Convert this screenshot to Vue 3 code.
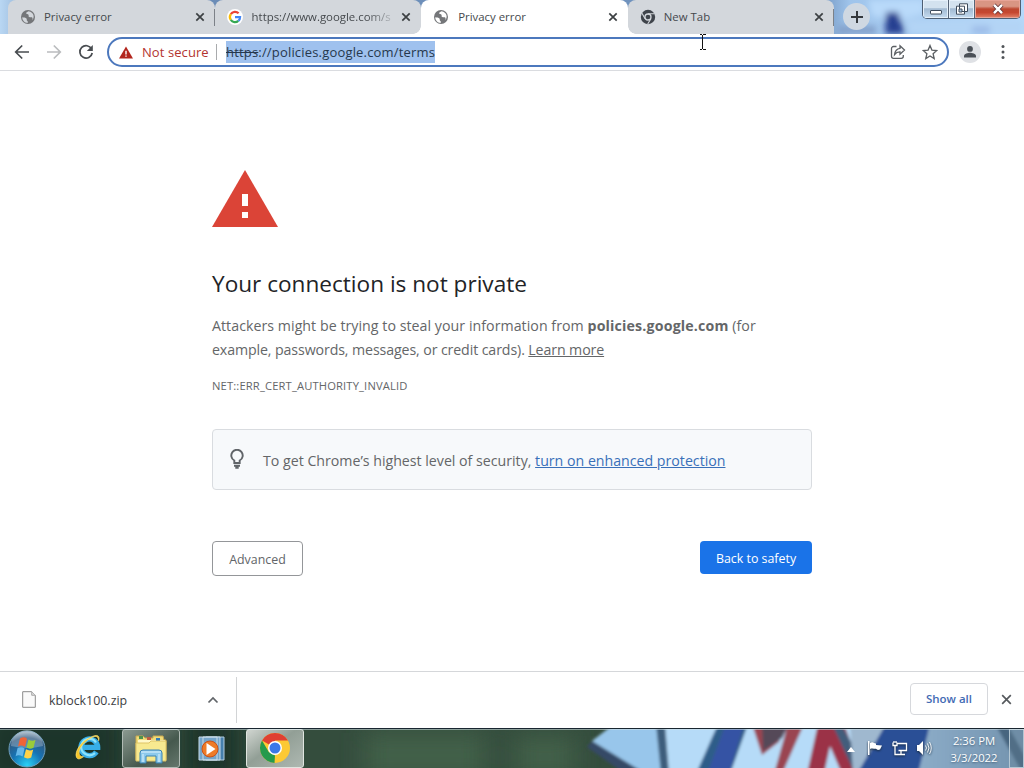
<template>
  <div class="screen">
    <header class="tab-strip">
      <svg class="sky" viewBox="0 0 1024 34" aria-hidden="true">
        <defs>
          <filter id="soft"><feGaussianBlur stdDeviation="3" /></filter>
          <linearGradient id="skyFill" x1="0" x2="1" y1="0" y2="0">
            <stop offset="0" stop-color="#b9d7f3" />
            <stop offset="0.05" stop-color="#6889b4" />
            <stop offset="0.8" stop-color="#7295c0" />
            <stop offset="0.83" stop-color="#9fc4eb" />
            <stop offset="1" stop-color="#b5d9fb" />
          </linearGradient>
        </defs>
        <rect width="1024" height="34" fill="url(#skyFill)" />
        <g filter="url(#soft)">
          <path d="M868 0h56v14l-26 6-26-4z" fill="#b9dafa" />
          <path d="M886 12h12l7 22h-20z" fill="#253f91" />
          <path d="M838 26h38v8h-38z" fill="#829fc9" />
          <path d="M905 20h119v14H910z" fill="#b3d4f5" />
          <path d="M972 26h18v8h-18z" fill="#9dbce8" />
        </g>
      </svg>

      <div class="tabs">
        <div v-for="tab in tabs" :key="tab.id" class="tab" :class="{ active: tab.active, divided: tab.divided }">
          <svg v-if="tab.icon === 'globe'" class="favicon" viewBox="0 0 16 16">
            <circle cx="8" cy="8" r="7" fill="#747679" />
            <path d="M2.3 8.2c2 .2 3.2.2 4.2 1.3.7.8-.3 1.8.9 2.5.8.5.3 1.3.2 1.900-3-.2-5.400-2.600-5.300-5.700zM8.500 2.200c-1.200.8-2.500 1-2.400 2.100.1 1 1.900.4 2.400 1.400.5 1.100-.4 1.800.8 2.300 1.600.7 2.900-.5 3.200 1 .2.8-.1 1.700-.2 2.200 2.500-3.200 1.800-8-3.800-9z" :fill="tab.active ? '#fff' : '#d3d7dc'" />
          </svg>
          <svg v-else-if="tab.icon === 'google'" class="favicon" viewBox="0 0 16 16">
            <circle cx="8" cy="8" r="8" fill="#fff" />
            <path d="M3.800 5.200a5 5 0 0 1 7.800-.9" fill="none" stroke="#ea4335" stroke-width="2.300" />
            <path d="M3.800 5.100a5.200 5.200 0 0 0 0 5.800" fill="none" stroke="#fbbc05" stroke-width="2.300" />
            <path d="M3.800 10.800a5 5 0 0 0 7.500 1" fill="none" stroke="#34a853" stroke-width="2.300" />
            <path d="M8 8.100h5.100c0 1.600-.6 2.800-1.700 3.800" fill="none" stroke="#4285f4" stroke-width="2.200" />
          </svg>
          <svg v-else class="favicon" viewBox="0 0 16 16">
            <circle cx="8" cy="8" r="7.200" fill="#3f444b" />
            <circle cx="8" cy="8" r="3" fill="#3f444b" stroke="#d3d7dc" stroke-width="1.300" />
            <path d="M8 4.700h6.500M5.100 9.700 2 4.200M10.900 9.700 7.700 15" stroke="#d3d7dc" stroke-width="1.100" />
          </svg>
          <span class="tab-title" :class="{ faded: tab.icon === 'google' }">{{ tab.title }}</span>
          <svg class="tab-close" viewBox="0 0 10 10"><path d="m1.300 1.300 7.400 7.400m0-7.400L1.300 8.700" /></svg>
        </div>
      </div>

      <button class="new-tab" aria-label="New tab">
        <svg viewBox="0 0 14 14"><path d="M7 1v12M1 7h12" /></svg>
      </button>

      <div class="window-buttons">
        <button class="win"><svg viewBox="0 0 14 12"><rect x="1.500" y="7.500" width="11" height="3.500" rx=".5" fill="#fff" stroke="#3f4c5c" /></svg></button>
        <button class="win"><svg viewBox="0 0 14 12"><path d="M4.500.8h8v7.700h-8z M1.500 3.200h8v8h-8z" fill="#fff" stroke="#3f4c5c" /><path d="M4 6h3v3H4z" fill="#a9c4df" stroke="#3f4c5c" /></svg></button>
        <button class="win close"><svg viewBox="0 0 14 12"><path d="m3 1.800 8 8.400m0-8.400-8 8.400" stroke="#5d3033" stroke-width="4" /><path d="m3 1.800 8 8.400m0-8.400-8 8.400" stroke="#fff" stroke-width="2.400" /></svg></button>
      </div>
    </header>

    <nav class="toolbar">
      <svg class="nav-icon back" viewBox="0 0 16 16"><path d="M15 8H2M8.200 1.500 1.700 8l6.500 6.500" /></svg>
      <svg class="nav-icon forward" viewBox="0 0 16 16"><path d="M1 8h13M7.800 1.500 14.300 8l-6.500 6.500" /></svg>
      <svg class="nav-icon reload" viewBox="0 0 16 16"><path d="M13.600 5A6.200 6.200 0 1 0 14.200 9" /><path d="M14.800 1v6h-6z" class="solid" /></svg>
      <div class="omnibox">
        <svg class="warn-icon" viewBox="0 0 14 13"><path d="M7 .5 14 12.500H0z" fill="#b3261e" /><path d="M6.300 4.800h1.400v3.600H6.300zm0 4.600h1.400v1.400H6.300z" fill="#fff" /></svg>
        <span class="not-secure">Not secure</span>
        <span class="divider"></span>
        <span class="url"><s>https</s>://policies.google.com/terms</span>
        <svg class="omni-icon share" viewBox="0 0 16 16"><path d="M6.500 2.500h-3a2 2 0 0 0-2 2v7.800a2 2 0 0 0 2 2h7.800a2 2 0 0 0 2-2V11" /><path d="M10 1.800 14.500 6 10 10.200V7.800C7.500 7.700 6 8.600 4.600 10.500 5 7 6.700 4.700 10 4.300z" /></svg>
        <svg class="omni-icon" viewBox="0 0 16 16"><path d="m8 1.500 1.900 4.600 4.900.4-3.700 3.200 1.100 4.900L8 12l-4.200 2.600 1.100-4.900L1.200 6.500l4.900-.4z" /></svg>
      </div>
      <span class="avatar"><svg viewBox="0 0 14 14"><circle cx="7" cy="3.900" r="2.900" /><path d="M1 12.500V11c0-2.200 4-3.200 6-3.200s6 1 6 3.200v1.500z" /></svg></span>
      <svg class="menu" viewBox="0 0 4 16"><circle cx="2" cy="2.500" r="1.500" /><circle cx="2" cy="8" r="1.500" /><circle cx="2" cy="13.500" r="1.500" /></svg>
    </nav>

    <main class="page">
      <div class="interstitial">
        <svg class="big-warning" viewBox="0 0 66 57"><path d="M33 0 66 57H0z" fill="#db4437" /><path d="M30 24h6v12h-6zm0 18h6v6h-6z" fill="#fff" /></svg>
        <h1>Your connection is not private</h1>
        <p class="message">
          <span class="line-one">Attackers might be trying to steal your information from <strong>policies.google.com</strong> (for</span><br>
          <span class="line-two">example, passwords, messages, or credit cards). <a>Learn more</a></span>
        </p>
        <div class="error-code">NET::ERR_CERT_AUTHORITY_INVALID</div>
        <div class="protection">
          <svg class="bulb" viewBox="0 0 16 20"><path d="M5.300 14v-2.500A5.700 5.700 0 1 1 10.700 11.500V14z" /><path d="M5 16.700h6M6.300 18.700h3.400" /></svg>
          <span>To get Chrome’s highest level of security, <a>turn on enhanced protection</a></span>
        </div>
        <div class="actions">
          <button class="btn advanced">Advanced</button>
          <button class="btn primary">Back to safety</button>
        </div>
      </div>
    </main>

    <section class="downloads">
      <div class="download-item">
        <svg class="file-icon" viewBox="0 0 14 17"><path d="M.7.700h9l3.600 3.600v12H.7z" fill="#fafafa" stroke="#8b8b8b" /><path d="M9.700.7v3.600h3.600" fill="#ddd" stroke="#aaa" /></svg>
        <span class="file-name">kblock100.zip</span>
        <svg class="chevron" viewBox="0 0 12 8"><path d="m1.500 6.500 4.500-4.500 4.500 4.500" /></svg>
      </div>
      <button class="show-all">Show all</button>
      <svg class="shelf-close" viewBox="0 0 12 12"><path d="m1.300 1.300 9.400 9.400m0-9.400-9.400 9.400" /></svg>
    </section>

    <footer class="taskbar">
      <svg class="wallpaper" viewBox="0 0 1024 40" aria-hidden="true">
        <defs>
          <filter id="glass"><feGaussianBlur stdDeviation="1.600" /></filter>
          <filter id="haze" x="-10%" y="-100%" width="120%" height="300%"><feGaussianBlur stdDeviation="12" /></filter>
          <linearGradient id="tray" x1="0" x2="1"><stop offset="0" stop-color="#8fafcb" /><stop offset="1" stop-color="#7292ad" /></linearGradient>
        </defs>
        <rect width="1024" height="40" fill="#344d3d" />
        <g filter="url(#haze)">
          <path d="M-20-20h145v80H-20zM182-20h60v80h-60z" fill="#1f352a" />
          <path d="M365 5h120v45H365zM515 8h60v42h-60z" fill="#42604a" />
        </g>
        <g filter="url(#glass)">
          <path d="m614-4-22 17 44 31h30V-4z" fill="#98c6eb" />
          <path d="m592 13 49 30h-20l-34-24z" fill="#354866" />
          <path d="M665-4h190v50H665z" fill="#b6dbf8" />
          <path d="M656-4h9l4 50h-8z" fill="#3d5d7b" />
          <path d="m718-4-22 50h34L748-4z" fill="#2f5d89" />
          <path d="m726-4-19 50h22L744-4z" fill="#3553a4" />
          <path d="M752-4h26l-6 13 8 4-18 14z" fill="#9a4451" />
          <path d="M762-4h27l-7 14-19 13z" fill="#544859" />
          <path d="M788-4h16l-22 50h-8z" fill="#9a4451" />
          <path d="M818-4h26l18 50h-20l-12-28-6 28h-17z" fill="#9b3146" />
          <path d="m832-4 9 0 28 50h-14z" fill="#425d7c" />
          <path d="M850-4h35l-20 50h-12z" fill="#9fb8cf" />
          <path d="M923-4h105v50H905z" fill="url(#tray)" />
          <path d="M886-4h44l-12 50h-61z" fill="#294f96" />
          <path d="M995-4h12l28 50h-12z" fill="#46657f" />
        </g>
      </svg>

      <div class="launchers">
        <span class="launcher orb">
          <svg viewBox="0 0 40 40">
            <defs><radialGradient id="orbFill" cx=".5" cy=".95" r=".95"><stop offset="0" stop-color="#2bd2f6" /><stop offset=".45" stop-color="#1673b4" /><stop offset=".8" stop-color="#31597f" /><stop offset="1" stop-color="#a5bac8" /></radialGradient></defs>
            <circle cx="20" cy="20" r="18" fill="url(#orbFill)" stroke="#6f9fbd" />
            <path d="M4 17A16 16 0 0 1 36 17Q20 21 4 17" fill="#fff" opacity=".25" />
            <path d="M13 9.500q4-2.400 7 .2l-2 8.300q-4-2.500-7-.5z" fill="#ef6437" />
            <path d="M21.500 10.500q4 2.300 7 .2l-2 8q-3.800 2-7-.1z" fill="#9acb3b" />
            <path d="M10.600 19.100q4-2.100 7 .4l-2 8q-4-2.400-7-.3z" fill="#65b7e9" />
            <path d="M19 20.300q3.800 2.200 7.200.2l-2 8q-3.900 2-7.200-.2z" fill="#ffd247" />
          </svg>
        </span>
        <span class="launcher ie">
          <svg viewBox="0 0 34 34">
            <path d="M26.500 22.500A9.500 9.500 0 1 1 28 17.500H11" fill="none" stroke="#37aee8" stroke-width="6" />
            <path d="M25 24A9.500 9.500 0 0 1 9.500 15C12 6 23 6 26 12" fill="none" stroke="#8ce3fb" stroke-width="2.500" />
            <path d="M29 10c2-6-2-8-9-4C10 10 1 22 4 29c2 3 5 1 8-1-3 0-5-1-5-4C6 18 15 9 22 6c4-2 7-1 7 4z" fill="#f5c529" stroke="#ffe680" stroke-width=".7" />
          </svg>
        </span>
        <span class="launcher framed explorer">
          <svg viewBox="0 0 34 32">
            <path d="M2 3h7l2 2h8V3h10l1 4h2v20H2z" fill="#f1dc79" stroke="#c9a850" />
            <path d="M4 7h27v3H4z" fill="#fff8c8" /><path d="M5 3h4v3H5z" fill="#4e9250" /><path d="M13 4h4v3h-4z" fill="#c25c42" /><path d="M22 5h4v3h-4z" fill="#377cb3" />
            <path d="M2 10h13l2-2h15v20H2z" fill="#f7e990" stroke="#dec467" />
            <path d="M6 30V20q0-3 3-3h16q3 0 3 3v10h-6v-7H12v7z" fill="#8cc9ec" stroke="#3b82b2" />
            <path d="M7 19h20M9 21v8m16-8v8" stroke="#dff4ff" />
          </svg>
        </span>
        <span class="launcher media">
          <svg viewBox="0 0 28 26"><path d="M8 1h18v23H8z" fill="#467fac" stroke="#b3cede" /><path d="M5 1h17v23H5zM1 1h18v23H1z" fill="#75a5ca" stroke="#c9dce9" /><circle cx="12" cy="13" r="8" fill="#ee7b27" stroke="#ca5218" /><path d="m8.500 7 9 6-9 6z" fill="#fff" /></svg>
        </span>
        <span class="launcher framed current">
          <svg viewBox="0 0 32 32">
            <circle cx="16" cy="16" r="15" fill="#fcc934" />
            <path d="M16 16 3 8.500A15 15 0 0 1 29 8.500H16z" fill="#df4033" />
            <path d="M3 8.500 9.800 20l6.200 3.500L15.500 31A15 15 0 0 1 3 8.500z" fill="#249a4c" />
            <circle cx="16" cy="16" r="7" fill="#fff" /><circle cx="16" cy="16" r="5.500" fill="#3b78e7" />
          </svg>
        </span>
      </div>

      <div class="tray">
        <svg class="tray-arrow" viewBox="0 0 8 5"><path d="M4 0 8 5H0z" /></svg>
        <svg class="tray-icon flag" viewBox="0 0 16 16"><path d="M1 1h1.500v14H1zM3 3c3-2 4 .5 6 .5L9 5l6 .5-2 4c-2 .8-3 .5-4-.7-2 0-4-.8-6 .2z" fill="#fff" /></svg>
        <svg class="tray-icon network" viewBox="0 0 16 16"><path d="M5.500 3.500h9v7h-8M9 11v3M6 14.500h7M1 2.500v3h4v-3M2 1v2m2-2v2M3 6v8.500h3" fill="none" stroke="#fff" stroke-width="1.300" /></svg>
        <svg class="tray-icon volume" viewBox="0 0 16 16"><path d="M1 5h2l4-4v14l-4-4H1z" fill="#fff" /><path d="M9.500 5.500q2 2.500 0 5M11.500 3.500q3 4.500 0 9M13.500 2q3.500 6 0 12" fill="none" stroke="#fff" stroke-width=".9" /></svg>
        <div class="clock"><span>2:36 PM</span><span>3/3/2022</span></div>
        <span class="show-desktop"></span>
      </div>
    </footer>

    <svg class="cursor" viewBox="0 0 7 16"><path d="M.500 .5H3M4 .5h2.500M3.500 1v14M.500 15.500H3M4 15.500h2.500" /></svg>
  </div>
</template>

<script setup>
const tabs = [
  { id: 1, title: 'Privacy error', icon: 'globe', divided: true },
  { id: 2, title: 'https://www.google.com/s', icon: 'google' },
  { id: 3, title: 'Privacy error', icon: 'globe', active: true },
  { id: 4, title: 'New Tab', icon: 'chrome', divided: true }
];
</script>

<style>
body { margin: 0; overflow: hidden; }
</style>

<style scoped>
.screen { position: relative; width: 1024px; height: 768px; display: flex; flex-direction: column; overflow: hidden; background: #fff; color: #3c4043; font-family: "Open Sans", "Noto Sans", sans-serif; }
.screen * { box-sizing: border-box; }
svg { display: block; flex: none; }
button { font-family: inherit; padding: 0; border: 0; }

/* Tab strip */
.tab-strip { position: relative; height: 34px; display: flex; flex: none; align-items: flex-start; }
.sky { position: absolute; inset: 0; width: 1024px; height: 34px; }
.tabs { position: relative; display: flex; height: 34px; padding-left: 8px; }
.tab { position: relative; width: 206.600px; height: 34px; display: flex; align-items: center; padding: 0 10px 0 12px; background: #d3d7dc; border-radius: 8px 8px 0 0; }
.tab.divided::after { content: ''; position: absolute; right: 0; top: 9px; width: 1px; height: 17px; background: #7c8188; }
.tab.active { background: #fff; z-index: 2; }
.tab.active::before, .tab.active::after { content: ''; position: absolute; bottom: 0; width: 8px; height: 8px; }
.tab.active::before { left: -8px; background: radial-gradient(circle at 0 0, transparent 7.500px, #fff 8px); }
.tab.active::after { right: -8px; background: radial-gradient(circle at 100% 0, transparent 7.500px, #fff 8px); }
.favicon { width: 16px; height: 16px; }
.tab-title { flex: 1; margin: 0 6px 0 8px; white-space: nowrap; font-size: 11.400px; line-height: 18px; color: #45494d; }
.tab-title.faded { margin-left: 9px; -webkit-mask-image: linear-gradient(90deg, #000 80%, transparent 102%); mask-image: linear-gradient(90deg, #000 80%, transparent 102%); }
.tab.active .tab-title { margin-left: 9px; }
.tab-close { width: 10px; height: 10px; fill: none; stroke: #3c4043; stroke-width: 1.700; }
.new-tab { position: relative; width: 27px; height: 27px; margin: 3px 0 0 9px; display: flex; align-items: center; justify-content: center; border-radius: 50%; background: #cfd8e2; }
.new-tab svg { width: 14px; height: 14px; stroke: #34383d; stroke-width: 2; }
.window-buttons { position: relative; width: 99px; height: 19px; margin-left: auto; margin-right: 3px; display: flex; border: 1px solid #4e5f73; border-top: 0; border-radius: 0 0 5px 5px; overflow: hidden; }
.win { width: 26px; display: flex; align-items: center; justify-content: center; background: linear-gradient(#d3e2ef 0 45%, #a1b9d1 48%, #c6dcf0); border-right: 1px solid #566477; box-shadow: inset 0 0 0 1px #e5f0fa; }
.win svg { width: 14px; height: 12px; fill: none; }
.win.close { flex: 1; border: 0; background: linear-gradient(#d99583 0 35%, #bd4730 50%, #c64730 70%, #e3856b); box-shadow: inset 0 0 0 1px #e7a497; }

/* Toolbar */
.toolbar { height: 37px; display: flex; flex: none; align-items: center; padding: 0 19px 0 14px; border-bottom: 1px solid #dadce0; background: #fff; }
.nav-icon { width: 16px; height: 16px; margin-right: 16px; fill: none; stroke: #484c50; stroke-width: 1.700; }
.nav-icon.forward { stroke: #babcbe; }
.nav-icon.reload { margin-right: 13px; }
.nav-icon .solid { fill: #484c50; stroke: none; }
.omnibox { width: 842px; height: 30px; display: flex; align-items: center; padding: 0 9px 0 10px; border: 2px solid #4c78bd; border-radius: 15px; }
.warn-icon { width: 14px; height: 13px; }
.not-secure { width: 67px; margin-left: 9px; font-size: 13px; line-height: 20px; letter-spacing: .08px; color: #b3342f; white-space: nowrap; }
.divider { width: 1px; height: 16px; margin: 0 9px 0 7px; background: #a9abad; }
.url { margin-right: auto; font-size: 13px; line-height: 22px; letter-spacing: .180px; color: #26384d; background: #9fc1ee; }
.omni-icon { width: 16px; height: 16px; margin-left: 16px; fill: none; stroke: #5b5f63; stroke-width: 1.300; }
.avatar { width: 22px; height: 22px; margin-left: 10px; display: flex; align-items: center; justify-content: center; border-radius: 50%; background: #dfe1e5; }
.avatar svg { width: 14px; height: 14px; fill: #4b5057; }
.menu { width: 4px; height: 16px; margin-left: auto; fill: #505458; }

/* Interstitial */
.page { flex: 1; min-height: 0; }
.interstitial { width: 600px; margin: 0 auto; padding-top: 99px; color: #646668; }
.big-warning { width: 66px; height: 57px; }
h1 { margin: 41px 0 0; font-size: 22.600px; line-height: 32px; font-weight: 400; color: #222326; white-space: nowrap; }
.message { margin: 14px 0 0; font-size: 14.200px; line-height: 24px; white-space: nowrap; }
.line-one { letter-spacing: .040px; }
.line-one strong { letter-spacing: .170px; }
.line-two { letter-spacing: -.110px; }
.message a { text-decoration: underline; }
.error-code { margin-top: 15px; font-size: 11.200px; line-height: 18px; letter-spacing: .150px; }
.protection { height: 61px; margin-top: 34px; display: flex; align-items: center; padding: 2px 17px 0; border: 1px solid #d9dce0; border-radius: 4px; background: #f7f9fb; font-size: 14.200px; letter-spacing: -.010px; white-space: nowrap; }
.bulb { width: 16px; height: 20px; margin: 0 18px 4px -1px; fill: none; stroke: #606468; stroke-width: 1.900; }
.protection a { color: #3970b9; text-decoration: underline; }
.actions { display: flex; justify-content: space-between; margin-top: 51px; }
.btn { border-radius: 4px; font-size: 12.400px; }
.advanced { width: 91px; height: 35px; padding-top: 1px; border: 1px solid #949699; background: #fff; color: #626568; }
.primary { width: 112px; height: 33px; padding-top: 1px; background: #1a73e8; color: #fff; }

/* Download shelf */
.downloads { height: 57px; display: flex; flex: none; align-items: center; border-top: 1px solid #d5d7da; background: #fff; }
.download-item { width: 237px; height: 46px; display: flex; align-items: center; padding: 0 17px 0 22px; border-right: 1px solid #d2d4d6; }
.file-icon { width: 14px; height: 17px; margin-bottom: 2px; }
.file-name { margin: 1px auto 0 13px; font-size: 12.400px; line-height: 18px; }
.chevron { width: 12px; height: 8px; fill: none; stroke: #606468; stroke-width: 1.700; }
.show-all { width: 78px; height: 32px; margin: 0 13px 2px auto; padding-bottom: 1px; border: 1px solid #d6d8dc; border-radius: 4px; background: #fff; color: #426bb4; font-size: 11.500px; font-weight: 600; }
.shelf-close { width: 11px; height: 11px; margin: 0 12px 2px 0; fill: none; stroke: #55595d; stroke-width: 1.800; }

/* Taskbar */
.taskbar { position: relative; height: 40px; display: flex; flex: none; justify-content: space-between; overflow: hidden; }
.taskbar::after { content: ''; position: absolute; inset: 0 0 auto; height: 2px; background: linear-gradient(#192630 50%, rgba(210, 225, 230, .55) 50%); }
.wallpaper { position: absolute; inset: 0; width: 1024px; height: 40px; }
.launchers { position: relative; display: flex; padding-left: 6px; }
.launcher { display: flex; align-items: center; justify-content: center; height: 39px; margin-top: 1px; }
.orb { width: 41px; }
.orb svg { width: 40px; height: 40px; }
.ie { width: 35px; margin-left: 25px; }
.ie svg { width: 30px; height: 32px; margin-right: 3px; margin-bottom: 3px; }
.framed { width: 58px; border: 1px solid #b1bbb5; border-radius: 3px; background: linear-gradient(145deg, #8b9990, #46594e 60%, #65766c); }
.explorer { margin-left: 15px; }
.explorer svg { width: 34px; height: 32px; }
.media { width: 28px; margin-left: 18px; }
.media svg { width: 28px; height: 26px; }
.current { margin-left: 20px; border-color: #e0e5e0; background: linear-gradient(145deg, #d0d5d0, #929f96 45%, #aeb8b1); }
.current svg { width: 32px; height: 32px; margin-bottom: 2px; }
.tray { position: relative; display: flex; align-items: center; color: #fff; }
.tray-arrow { width: 8px; height: 5px; margin: 2px 12px 0 0; fill: #fff; }
.tray-icon { width: 16px; height: 16px; margin-right: 9px; filter: drop-shadow(0 1px 1px #172b40); }
.network { margin-right: 8px; }
.volume { margin-right: 15px; }
.clock { width: 54px; display: flex; flex-direction: column; align-items: center; padding-top: 2px; font-size: 11.300px; line-height: 17px; white-space: nowrap; text-shadow: 0 1px 2px rgba(20, 45, 70, .5); }
.show-desktop { width: 15px; height: 39px; margin-left: 8px; border: 1px solid #b4c7d3; background: rgba(100, 130, 150, .35); }

/* Text pointer */
.cursor { position: absolute; left: 699px; top: 34px; width: 7px; height: 16px; fill: none; stroke: #111; shape-rendering: crispEdges; }
</style>
